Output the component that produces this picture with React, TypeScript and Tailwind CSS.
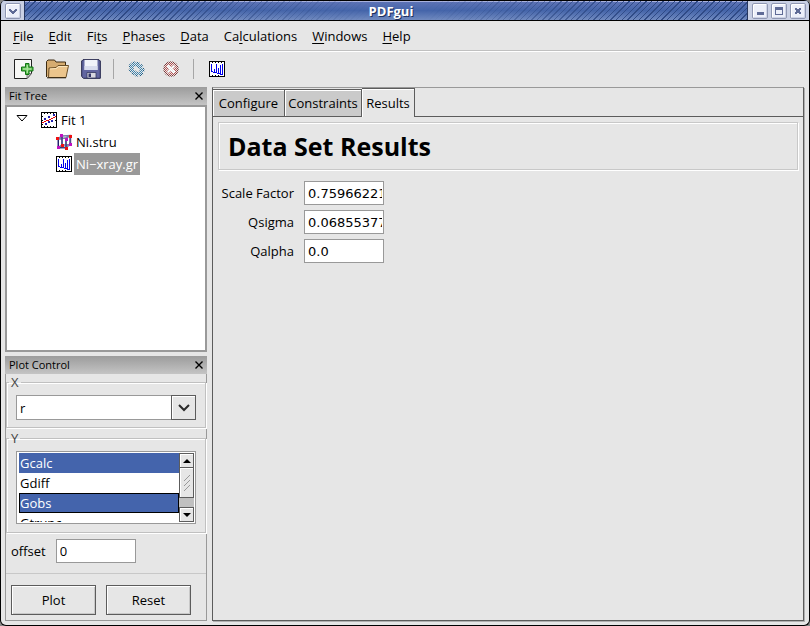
import React, { useState } from "react";

function WindowButton({ label, children }: { label: string; children: React.ReactNode }) {
  return (
    <button
      type="button"
      aria-label={label}
      className="flex h-4 w-4 items-center justify-center rounded-xs border border-[#8f97b3] bg-[#eceff9] shadow-[inset_1px_1px_0_#fff,inset_-1px_-1px_0_#cdd3e6]"
    >
      <svg width="10" height="10" viewBox="0 0 10 10" shapeRendering="crispEdges" fill="#5f6b96">
        {children}
      </svg>
    </button>
  );
}

function TitleBar() {
  return (
    <header className="flex h-[21px] shrink-0 border-y border-black bg-[#4766ab]">
      <div className="flex w-6 items-center justify-center border-r border-[#26365f] bg-[#c9d0e4]">
        <WindowButton label="Window menu">
          <path d="M1 3h2v1h1v1h2V4h1V3h2v2H8v1H7v1H6v1H4V7H3V6H2V5H1z" />
        </WindowButton>
      </div>
      <div className="grid flex-1 bg-linear-to-b from-[#5f74b6] via-[#4565aa] to-[#718abf] shadow-[inset_0_1px_0_#a9b2dc]">
        <div className="col-start-1 row-start-1 bg-[repeating-linear-gradient(135deg,transparent_0px,transparent_3px,#2f4a86_3px,#2f4a86_4px)] mask-[linear-gradient(90deg,#000_15%,transparent_48%,transparent_55%,#000_85%)]" />
        <h1 className="col-start-1 row-start-1 self-center pl-[10px] text-center text-[13px] leading-4 font-bold text-white [text-shadow:1px_1px_0_#1f2f5c]">
          PDFgui
        </h1>
      </div>
      <div className="flex w-[62px] items-center justify-center gap-[3px] border-l border-[#26365f] bg-[#c9d0e4]">
        <WindowButton label="Minimize">
          <path d="M2 6h7v3H2z" />
        </WindowButton>
        <WindowButton label="Maximize">
          <path d="M1 1h8v8H1zM2 4v4h6V4z" fillRule="evenodd" />
        </WindowButton>
        <WindowButton label="Close">
          <path d="M2 2h2v1h2V2h2v2H7v2h1v2H6V7H4v1H2V6h1V4H2z" />
        </WindowButton>
      </div>
    </header>
  );
}

const menus = [
  ["", "F", "ile"],
  ["", "E", "dit"],
  ["Fi", "t", "s"],
  ["", "P", "hases"],
  ["", "D", "ata"],
  ["Ca", "l", "culations"],
  ["", "W", "indows"],
  ["", "H", "elp"],
];

function MenuBar() {
  return (
    <nav className="mx-1 flex h-[30px] shrink-0 items-center gap-[15px] border-b border-[#c0c0c0] px-2 shadow-[0_1px_0_#fff]">
      {menus.map(([before, key, after]) => (
        <button key={before + key + after} type="button" className="leading-5">
          {before}
          <span className="underline underline-offset-2">{key}</span>
          {after}
        </button>
      ))}
    </nav>
  );
}

function PlotIcon() {
  return (
    <svg width="16" height="16" viewBox="0 0 16 16" shapeRendering="crispEdges">
      <path d="M0 0h16v16H0z" />
      <path d="M1 1h14v14H1z" fill="#fff" />
      <path d="M3 1h1v1H3zM6 1h1v1H6zM9 1h1v1H9zM12 1h1v1h-1zM3 14h1v1H3zM6 14h1v1H6zM9 14h1v1H9z" />
      <path d="M2.500 3v8M5.500 8v4M7.500 3v9M9.500 7v6M11.500 4v9M13.500 3v11M2 10.500h2M4 11.500h4M8 12.500h3M11 13.500h3" stroke="#0000ee" fill="none" />
    </svg>
  );
}

function FitIcon() {
  return (
    <svg width="16" height="16" viewBox="0 0 16 16" shapeRendering="crispEdges">
      <path d="M0 0h16v16H0z" />
      <path d="M1 1h14v14H1z" fill="#fff" />
      <path d="M3 1h1v1H3zM6 1h1v1H6zM9 1h1v1H9zM12 1h1v1h-1zM3 14h1v1H3zM6 14h1v1H6zM9 14h1v1H9zM12 14h1v1h-1zM1 4h1v1H1zM1 8h1v1H1zM14 8h1v1h-1zM1 12h1v1H1z" />
      <path d="M1 10h2V9h2V8h3V7h2V6h2V5h2V4h1v1h-1v1h-2v1h-2v1H8v1H5v1H3v1H1z" fill="#e80000" />
      <path d="M4 11h2v2H4zM3 6h2v2H3zM7 9h2v2H7zM10 8h2v2h-2zM7 4h2v2H7zM12 2h2v2h-2z" fill="#2020b0" />
    </svg>
  );
}

function CrystalIcon() {
  return (
    <svg width="16" height="16" viewBox="0 0 16 16">
      <path d="M2 5l8-1v9l-8 1zM6 2l8.500-.5v9L6 11zM2 5l4-3M10 4l4.500-2.500M10 13l4.500-2.500M2 14l4-3" fill="none" stroke="#7a7aa8" strokeWidth="1.600" />
      <path d="M2.500 5v8M10 5v8M6 3v8M14 3v7M2 13.500l8 .5" fill="none" stroke="#22226c" />
      <g shapeRendering="crispEdges">
        <path d="M0 3h3v3H0zM13 1h3v3h-3zM9 13h3v3H9zM5 10h3v3H5z" fill="#f01010" />
        <path d="M4 0h3v3H4zM9 4h3v3H9zM1 12h3v3H1zM13 9h3v3h-3z" fill="#c010c0" />
      </g>
    </svg>
  );
}

function NewIcon() {
  return (
    <svg width="20" height="20" viewBox="0 0 20 20">
      <path d="M.5.5h17v14l-4.500 5H.5z" fill="#f8f8f6" stroke="#222" />
      <path d="M13 19.500v-5h4.500z" fill="#ccc" stroke="#555" strokeWidth=".7" />
      <path d="M11.500 4.500h3.500V8h4v4h-4v3.500h-3.500V12H7.500V8h4z" fill="#55b949" stroke="#127414" strokeLinejoin="round" />
      <path d="M13.300 6v8M9 10h8.500" stroke="#a9e59c" strokeWidth="1.400" />
    </svg>
  );
}

function FolderIcon() {
  return (
    <svg width="23" height="20" viewBox="0 0 23 20">
      <path d="M.5 18V2.500L2 1h6.500L10 3h9.500v4" fill="#d6ac70" stroke="#3d2b12" />
      <path d="M2.500 18.500L3 9l7-.5L12 6.500h10.500L20 18.500z" fill="#ecc58c" stroke="#6b4f26" strokeLinejoin="round" />
      <path d="M4 10l6.500-.5 2-2h9" fill="none" stroke="#fbe6bd" />
      <path d="M1 18.800h19" stroke="#2e210e" />
    </svg>
  );
}

function SaveIcon() {
  return (
    <svg width="20" height="20" viewBox="0 0 20 20">
      <path d="M.7 2L2 .7h16L19.300 2v17.300H2.500L.7 17.500z" fill="#6266a0" stroke="#1f2146" />
      <path d="M3.500 1h13v10h-13z" fill="#f1f3fa" />
      <path d="M3.500 7h13v4h-13z" fill="#d8dcee" />
      <path d="M6 13.500h9V19H6z" fill="#d8d8e0" stroke="#343760" strokeWidth=".8" />
      <path d="M7.500 14.500h2.500V18H7.500z" fill="#34376a" />
    </svg>
  );
}

function FitRunIcon() {
  return (
    <svg width="18" height="18" viewBox="0 0 18 18">
      <defs>
        <pattern id="runDots" width="2" height="2" patternUnits="userSpaceOnUse">
          <path d="M0 0h1v1H0zM1 1h1v1H1z" fill="#e6e6e6" shapeRendering="crispEdges" />
        </pattern>
      </defs>
      <g fill="none" transform="rotate(38 8.500 9)">
        <ellipse cx="8.500" cy="9" rx="6" ry="4.500" stroke="#1f5f88" strokeWidth="5" strokeDasharray="2.500 1" />
        <ellipse cx="8.500" cy="9" rx="5.500" ry="4.200" stroke="#3f86b0" strokeWidth="3" />
      </g>
      <path d="M0 0h18v18H0z" fill="url(#runDots)" />
    </svg>
  );
}

function StopIcon() {
  return (
    <svg width="16" height="16" viewBox="0 0 16 16">
      <defs>
        <pattern id="stopDots" width="2" height="2" patternUnits="userSpaceOnUse">
          <path d="M0 0h1v1H0zM1 1h1v1H1z" fill="#e6e6e6" shapeRendering="crispEdges" />
        </pattern>
      </defs>
      <circle cx="8" cy="8" r="7" fill="#b85050" stroke="#7c3838" strokeWidth="1.500" />
      <path d="M4.500 4.500l7 7M11.500 4.500l-7 7" stroke="#fff" strokeWidth="2.500" />
      <path d="M0 0h16v16H0z" fill="url(#stopDots)" />
    </svg>
  );
}

function ToolBar() {
  return (
    <div role="toolbar" aria-label="Main" className="flex h-[35px] shrink-0 items-center pl-[13px]">
      <button type="button" aria-label="New" className="w-8"><NewIcon /></button>
      <button type="button" aria-label="Open" className="w-[35px]"><FolderIcon /></button>
      <button type="button" aria-label="Save" className="w-8"><SaveIcon /></button>
      <div className="mr-[14px] h-5 w-px bg-[#a6a6a6]" />
      <button type="button" aria-label="Run fit" className="w-[35px]"><FitRunIcon /></button>
      <button type="button" aria-label="Stop fit" className="w-[30px]"><StopIcon /></button>
      <div className="mr-[15px] h-5 w-px bg-[#a6a6a6]" />
      <button type="button" aria-label="Quick plot"><PlotIcon /></button>
    </div>
  );
}

function Caption({ title }: { title: string }) {
  return (
    <div className="flex h-[18px] shrink-0 items-center justify-between bg-linear-to-b from-[#9c9c9c] to-[#c4c4c4] px-1">
      <h2 className="text-[11px] leading-4">{title}</h2>
      <button type="button" aria-label={"Close " + title}>
        <svg width="8" height="8" viewBox="0 0 8 8">
          <path d="M.5.5l7 7M7.500.5l-7 7" stroke="#000" strokeWidth="1.400" />
        </svg>
      </button>
    </div>
  );
}

function FitTree() {
  return (
    <section className="flex h-[265px] shrink-0 flex-col">
      <Caption title="Fit Tree" />
      <ul role="tree" className="flex-1 border-2 border-[#999] bg-white pt-[2px]">
        <li role="treeitem" aria-expanded="true">
          <div className="flex h-[22px] items-center pl-[9px]">
            <svg width="12" height="12" viewBox="0 0 12 12" className="mr-[13px]">
              <path d="M1 1.500h10L6 7z" fill="#fff" stroke="#000" />
            </svg>
            <FitIcon />
            <span className="ml-1">Fit 1</span>
          </div>
          <ul role="group">
            <li role="treeitem" className="flex h-[22px] items-center pl-[49px]">
              <CrystalIcon />
              <span className="ml-[2px] px-[2px]">Ni.stru</span>
            </li>
            <li role="treeitem" aria-selected="true" className="flex h-[22px] items-center pl-[49px]">
              <PlotIcon />
              <span className="ml-[2px] bg-[#999] px-[2px] leading-[22px] text-white">Ni−xray.gr</span>
            </li>
          </ul>
        </li>
      </ul>
    </section>
  );
}

function ScrollBar() {
  const cap =
    "flex h-[15px] shrink-0 items-center justify-center border border-[#5c5c5c] bg-[#e6e6e6] shadow-[inset_1px_1px_0_#fff]";
  return (
    <div className="flex w-[15px] shrink-0 flex-col bg-[#c0c0c0]">
      <button type="button" aria-label="Scroll up" className={cap}>
        <svg width="8" height="4" viewBox="0 0 8 4"><path d="M0 4l4-4 4 4z" /></svg>
      </button>
      <div className="flex h-[30px] items-center justify-center border-x border-b border-[#5c5c5c] bg-[#e6e6e6] shadow-[inset_1px_1px_0_#fff]">
        <svg width="8" height="18" viewBox="0 0 8 18"><path d="M1 7l6-6M1 12l6-6M1 17l6-6" stroke="#999" /></svg>
      </div>
      <div className="flex-1" />
      <button type="button" aria-label="Scroll down" className={cap}>
        <svg width="8" height="4" viewBox="0 0 8 4"><path d="M0 0l4 4 4-4z" /></svg>
      </button>
    </div>
  );
}

const group =
  "mr-px border border-[#c0c0c0] px-[9px] shadow-[1px_1px_0_#fff,inset_1px_1px_0_#fff]";
const legend = "-ml-[7px] px-[2px] leading-4 text-[#444]";
const pushButton =
  "h-[30px] w-[85px] border border-[#5c5c5c] bg-[#e6e6e6] shadow-[inset_1px_1px_0_#fff,inset_-1px_-1px_0_#c8c8c8]";
const textBox = "h-6 w-20 border border-[#999] bg-white pr-px pl-[3px] outline-none";

function PlotControl() {
  const [offset, setOffset] = useState("0");
  return (
    <section className="flex flex-1 flex-col border border-t-0 border-[#999]">
      <div className="-mx-px">
        <Caption title="Plot Control" />
      </div>
      <fieldset className={group + " h-[54px]"}>
        <legend className={legend}><label htmlFor="xAxis">X</label></legend>
        <div className="mt-[5px] grid h-[25px] w-[180px]">
          <select
            id="xAxis"
            className="col-start-1 row-start-1 appearance-none border border-[#999] bg-white px-[3px] outline-none"
          >
            <option>r</option>
          </select>
          <span className="pointer-events-none col-start-1 row-start-1 flex w-[25px] items-center justify-center justify-self-end border border-[#5c5c5c] bg-[#e6e6e6] shadow-[inset_1px_1px_0_#fff]">
            <svg width="12" height="8" viewBox="0 0 12 8">
              <path d="M1 1l5 5 5-5" fill="none" stroke="#2a2a2a" strokeWidth="2" />
            </svg>
          </span>
        </div>
      </fieldset>
      <fieldset className={group + " mt-[2px] h-[103px]"}>
        <legend className={legend}><label htmlFor="yAxis">Y</label></legend>
        <div className="mt-[5px] flex h-[73px] w-[180px] border border-[#999] bg-white p-px pl-[2px]">
          <select
            id="yAxis"
            multiple
            size={3}
            defaultValue={["Gcalc", "Gobs"]}
            className="h-full min-w-0 flex-1 overflow-hidden outline-none [scrollbar-width:none]"
          >
            {["Gcalc", "Gdiff", "Gobs", "Gtrunc"].map((name) => (
              <option
                key={name}
                className={
                  "h-5 min-h-5 px-px pt-px pb-0 leading-5 checked:bg-[linear-gradient(#4464ac,#4464ac)] checked:[-webkit-text-fill-color:#fff]" +
                  (name === "Gobs" ? " shadow-[inset_0_0_0_1px_#000]" : "")
                }
              >
                {name}
              </option>
            ))}
          </select>
          <ScrollBar />
        </div>
      </fieldset>
      <div className="mt-[6px] flex items-center gap-[10px] pl-[5px]">
        <label htmlFor="offset">offset</label>
        <input id="offset" className={textBox} value={offset} onChange={(e) => setOffset(e.target.value)} />
      </div>
      <div className="mt-[10px] flex gap-[10px] border-t border-[#c8c8c8] pt-[11px] pl-[5px]">
        <button type="button" className={pushButton}>Plot</button>
        <button type="button" className={pushButton}>Reset</button>
      </div>
    </section>
  );
}

const results = [
  { id: "scale", label: "Scale Factor", value: "0.75966221" },
  { id: "qsigma", label: "Qsigma", value: "0.06855377" },
  { id: "qalpha", label: "Qalpha", value: "0.0" },
];

function Notebook() {
  const tab = "h-7 border-y border-r border-[#5c5c5c] bg-[#cacaca] shadow-[inset_1px_1px_0_#fff]";
  return (
    <main className="flex min-w-0 flex-1 flex-col border border-[#5c5c5c] border-t-[#999] shadow-[1px_1px_0_#b0b0b0]">
      <div role="tablist" className="flex h-[29px] shrink-0 items-end">
        <button type="button" role="tab" className={tab + " w-[72px]"}>Configure</button>
        <button type="button" role="tab" className={tab + " w-[77px]"}>Constraints</button>
        <button
          type="button"
          role="tab"
          aria-selected="true"
          className="h-[29px] w-[53px] border-t border-r border-[#5c5c5c] shadow-[inset_1px_1px_0_#fff]"
        >
          Results
        </button>
        <div className="h-full flex-1 border-b border-[#5c5c5c]" />
      </div>
      <div className="flex flex-col px-[5px] pt-[5px]">
        <div className="flex h-12 items-center border border-[#c8c8c8] px-[9px] shadow-[1px_1px_0_#fff,inset_1px_1px_0_#fff]">
          <h2 className="text-[25px] leading-8 font-bold">Data Set Results</h2>
        </div>
        <div className="mt-[11px] grid grid-cols-[76px_80px] items-center gap-x-[10px] gap-y-[5px]">
          {results.map((r) => (
            <React.Fragment key={r.id}>
              <label htmlFor={r.id} className="text-right whitespace-nowrap">{r.label}</label>
              <input id={r.id} defaultValue={r.value} className={textBox + " font-['DejaVu_Sans',sans-serif]"} />
            </React.Fragment>
          ))}
        </div>
      </div>
    </main>
  );
}

export default function App() {
  return (
    <div className="h-screen bg-[#888]">
      <div className="flex h-full flex-col overflow-hidden rounded-md border border-t-0 border-black bg-[#e6e6e6] font-['Open_Sans','Noto_Sans',sans-serif] text-[13px] leading-5 text-black">
        <TitleBar />
        <MenuBar />
        <ToolBar />
        <div className="flex min-h-0 flex-1 gap-[5px] px-1 pr-[5px] pt-px pb-1">
          <aside className="flex w-[202px] shrink-0 flex-col gap-1">
            <FitTree />
            <PlotControl />
          </aside>
          <Notebook />
        </div>
      </div>
    </div>
  );
}
